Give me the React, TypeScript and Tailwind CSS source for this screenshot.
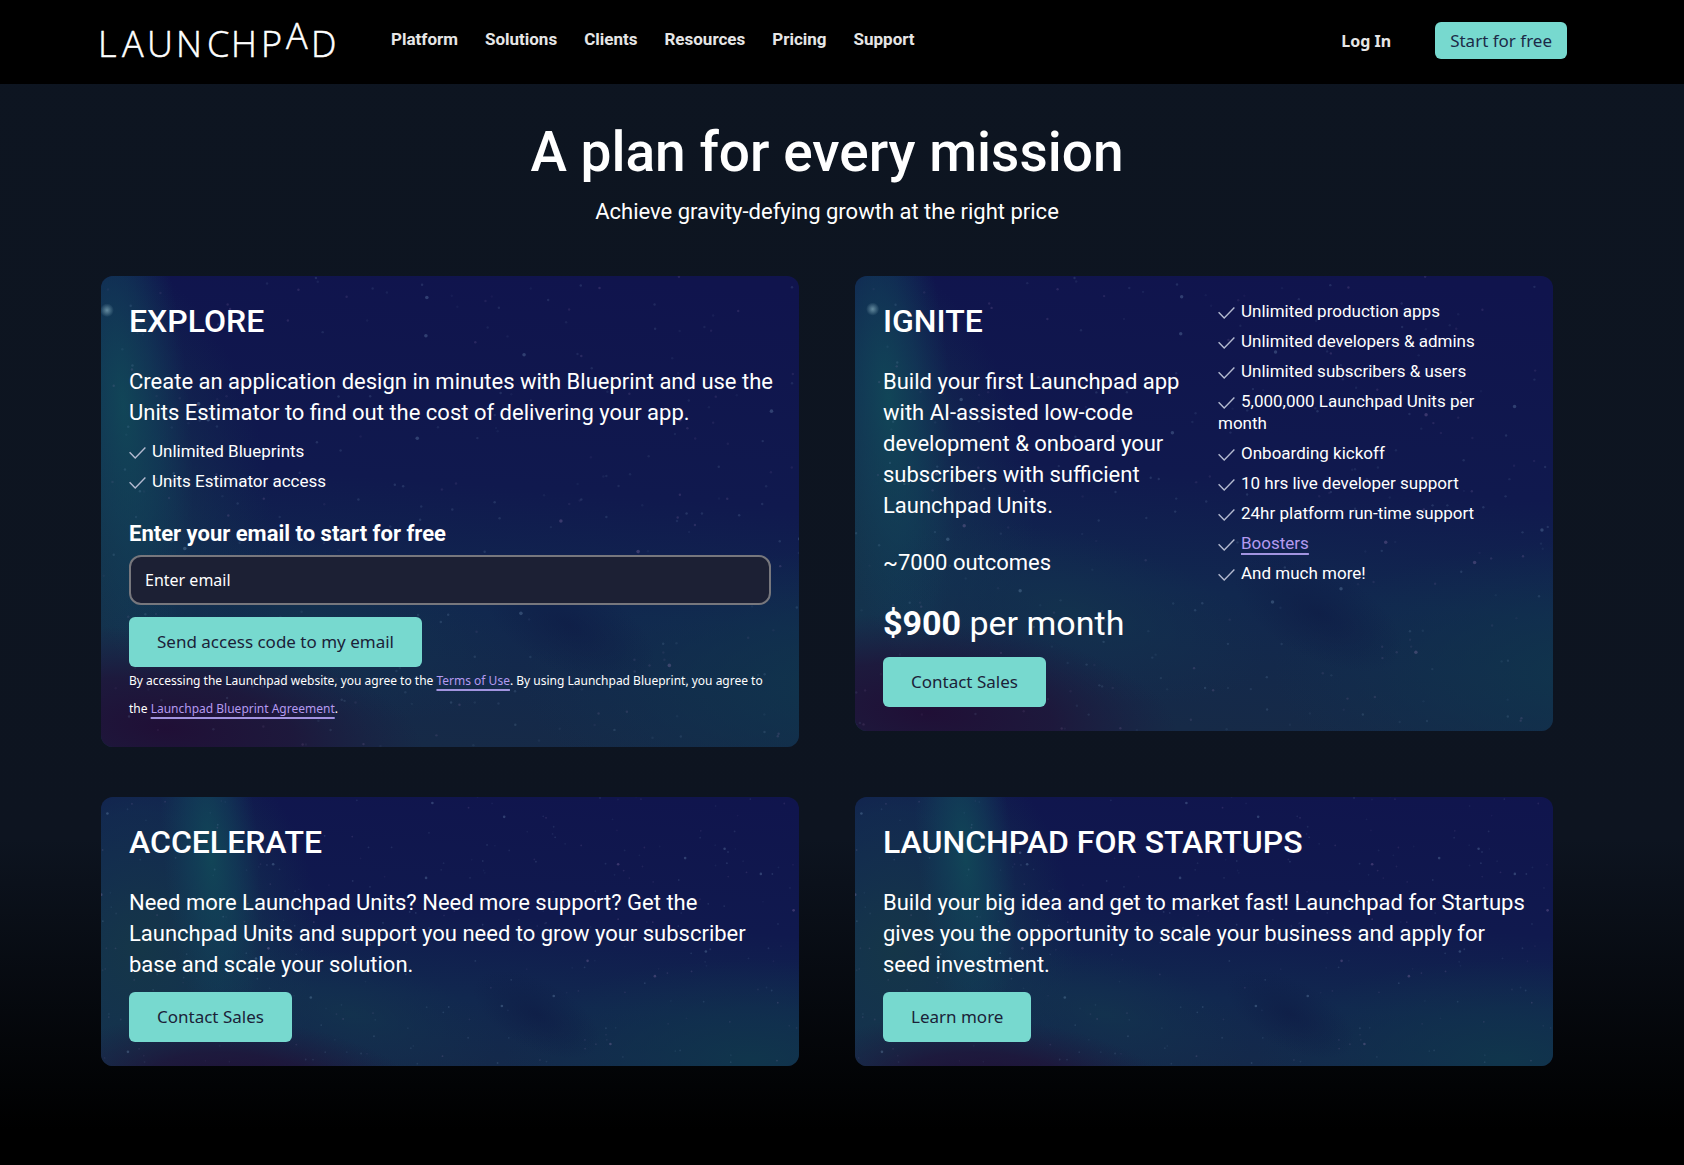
import type { ReactNode } from "react";

const DISPLAY = "font-['Roboto','Noto_Sans',sans-serif]";
const BODY = "font-['Noto_Sans','Open_Sans',sans-serif]";

const NAV = ["Platform", "Solutions", "Clients", "Resources", "Pricing", "Support"];

const IGNITE_FEATURES = [
  "Unlimited production apps",
  "Unlimited developers & admins",
  "Unlimited subscribers & users",
  "5,000,000 Launchpad Units per month",
  "Onboarding kickoff",
  "10 hrs live developer support",
  "24hr platform run-time support",
  "Boosters",
  "And much more!",
];

/* Deterministic pseudo-random star field. */
const STARS = (() => {
  let seed = 41;
  const next = () => {
    seed = (seed * 16807) % 2147483647;
    return seed / 2147483647;
  };
  return Array.from({ length: 420 }, () => {
    const x = Math.round(next() * 6970) / 10;
    const y = Math.round(next() * 3440) / 10;
    const k = next();
    return {
      x,
      y,
      r: k > 0.94 ? 1.3 : 0.9,
      o: k > 0.94 ? 0.26 : 0.05 + next() * 0.12,
      c: next() > 0.6 ? "#b58fc8" : "#8fb4d8",
    };
  });
})();

function Sky({ id }: { id: string }) {
  const u = (name: string) => `url(#${id}-${name})`;
  return (
    <svg
      aria-hidden="true"
      className="absolute inset-0 -z-10 h-full w-full"
      viewBox="0 0 697 344"
      preserveAspectRatio="xMidYMid slice"
    >
      <defs>
        <linearGradient id={`${id}-base`} x1="0.65" y1="0" x2="0.5" y2="1">
          <stop offset="0" stopColor="#10144d" />
          <stop offset="0.45" stopColor="#10194e" />
          <stop offset="0.7" stopColor="#11284f" />
          <stop offset="1" stopColor="#162a47" />
        </linearGradient>
        <radialGradient id={`${id}-teal`}>
          <stop offset="0" stopColor="#114a59" stopOpacity="0.85" />
          <stop offset="0.5" stopColor="#11445a" stopOpacity="0.5" />
          <stop offset="1" stopColor="#11405a" stopOpacity="0" />
        </radialGradient>
        <radialGradient id={`${id}-left`}>
          <stop offset="0" stopColor="#153648" stopOpacity="1" />
          <stop offset="0.6" stopColor="#143650" stopOpacity="0.6" />
          <stop offset="1" stopColor="#143450" stopOpacity="0" />
        </radialGradient>
        <radialGradient id={`${id}-mid`}>
          <stop offset="0" stopColor="#13344e" stopOpacity="0.8" />
          <stop offset="1" stopColor="#13304f" stopOpacity="0" />
        </radialGradient>
        <radialGradient id={`${id}-corner`}>
          <stop offset="0" stopColor="#10364c" stopOpacity="0.95" />
          <stop offset="0.5" stopColor="#10334d" stopOpacity="0.55" />
          <stop offset="1" stopColor="#10304f" stopOpacity="0" />
        </radialGradient>
        <radialGradient id={`${id}-plum`}>
          <stop offset="0" stopColor="#200f36" stopOpacity="1" />
          <stop offset="0.5" stopColor="#1f1439" stopOpacity="0.8" />
          <stop offset="1" stopColor="#1c1a40" stopOpacity="0" />
        </radialGradient>
        <radialGradient id={`${id}-dark`}>
          <stop offset="0" stopColor="#0e1a44" stopOpacity="0.6" />
          <stop offset="1" stopColor="#0e1a44" stopOpacity="0" />
        </radialGradient>
        <radialGradient id={`${id}-glow`}>
          <stop offset="0" stopColor="#9cc4d0" stopOpacity="0.6" />
          <stop offset="1" stopColor="#9cc4d0" stopOpacity="0" />
        </radialGradient>
      </defs>
      <rect width="697" height="344" fill={u("base")} />
      <ellipse cx="40" cy="190" rx="180" ry="230" fill={u("left")} />
      <ellipse cx="110" cy="95" rx="48" ry="200" fill={u("teal")} transform="rotate(-5 110 95)" />
      <ellipse cx="250" cy="255" rx="150" ry="60" fill={u("mid")} transform="rotate(14 250 255)" />
      <ellipse cx="650" cy="300" rx="250" ry="100" fill={u("corner")} />
      <ellipse cx="435" cy="255" rx="70" ry="34" fill={u("dark")} transform="rotate(28 435 255)" />
      <ellipse cx="140" cy="330" rx="190" ry="72" fill={u("plum")} transform="rotate(6 140 330)" />
      <circle cx="98" cy="25" r="5" fill={u("glow")} />
      {STARS.map((s, i) => (
        <circle key={i} cx={s.x} cy={s.y} r={s.r} fill={s.c} opacity={s.o} />
      ))}
    </svg>
  );
}

function Card({ id, title, children }: { id: string; title: string; children: ReactNode }) {
  return (
    <section
      aria-labelledby={`${id}-title`}
      className="relative isolate overflow-hidden rounded-xl px-7 pt-6 pb-6"
    >
      <Sky id={id} />
      <Title id={id}>{title}</Title>
      {children}
    </section>
  );
}

function Title({ id, children }: { id: string; children: ReactNode }) {
  return (
    <h2 id={`${id}-title`} className="text-[32px] leading-[43px] font-medium">
      {children}
    </h2>
  );
}

function Lead({ children }: { children: ReactNode }) {
  return <p className="mt-[23px] -mr-1 mb-3 text-[22px] leading-[31px]">{children}</p>;
}

function Check() {
  return (
    <svg
      aria-hidden="true"
      className="mr-1.5 inline-block h-3 w-[17px] align-[-2px]"
      viewBox="0 0 17 12"
      fill="none"
      stroke="#b4bad0"
      strokeWidth="1.4"
    >
      <path d="M0.6 5.2 L6.2 11 L16.4 0.6" />
    </svg>
  );
}

function Features({ items }: { items: string[] }) {
  return (
    <ul className="flex flex-col gap-2 pr-4 text-[17px] leading-[22px]">
      {items.map((item) => (
        <li key={item}>
          <Check />
          {item === "Boosters" ? <TextLink>{item}</TextLink> : item}
        </li>
      ))}
    </ul>
  );
}

function TextLink({ children }: { children: ReactNode }) {
  return (
    <a
      href="#"
      className="text-[#b49af0] underline decoration-[#a294e0] decoration-2 underline-offset-4 [text-decoration-skip-ink:none]"
    >
      {children}
    </a>
  );
}

function Action({ children }: { children: ReactNode }) {
  return (
    <button
      type="button"
      className={`${BODY} block h-[50px] rounded-md bg-[#77d9cf] px-7 text-[17px] text-[#1b2238]`}
    >
      {children}
    </button>
  );
}

function Logo() {
  return (
    <svg role="img" aria-label="Launchpad" className="h-[62px] w-[242px]" viewBox="-4 -12 242 62">
      <text
        className="font-['Open_Sans','Noto_Sans',sans-serif] text-[36px] font-light"
        fill="#ffffff"
        stroke="#ffffff"
        strokeWidth="0.5"
        x="-3 21 46 75 106 130 160 185 210"
        y="37 37 37 37 37 37 37 29 37"
      >
        LAUNCHPAD
      </text>
    </svg>
  );
}

export default function App() {
  return (
    <div
      className={`${DISPLAY} min-h-screen bg-[linear-gradient(180deg,#0d1521_0%,#0d1420_72%,#000000_97%)] pb-24 text-white`}
    >
      <header className="flex h-[84px] items-start bg-black pr-[117px] pl-[97px]">
        <a href="#" className="mt-2">
          <Logo />
        </a>
        <nav className="mt-7 ml-[52px] flex gap-[27px] text-[17px] leading-[22px] font-bold text-[#e6e6e6]">
          {NAV.map((item) => (
            <a key={item} href="#">
              {item}
            </a>
          ))}
        </nav>
        <div className={`${BODY} mt-[22px] ml-auto flex items-center gap-11`}>
          <a href="#" className="text-base font-bold text-[#e6e6e6]">
            Log In
          </a>
          <button
            type="button"
            className="h-[37px] rounded-md bg-[#77d9cf] px-[15px] text-[17px] text-[#1b2a48]"
          >
            Start for free
          </button>
        </div>
      </header>

      <main className="pr-[131px] pl-[101px]">
        <div className="pt-9 pb-12 text-center">
          <h1 className="text-[55px] leading-[64px] font-medium">A plan for every mission</h1>
          <p className="mt-3 text-[22px] leading-8">Achieve gravity-defying growth at the right price</p>
        </div>

        <div className="grid grid-cols-2 items-start gap-x-14 gap-y-[50px]">
          <Card id="explore" title="EXPLORE">
            <Lead>
              Create an application design in minutes with Blueprint and use the Units Estimator to
              find out the cost of delivering your app.
            </Lead>
            <Features items={["Unlimited Blueprints", "Units Estimator access"]} />
            <form onSubmit={(e) => e.preventDefault()}>
              <label htmlFor="email" className="mt-7 block text-[22px] leading-7 font-bold">
                Enter your email to start for free
              </label>
              <input
                id="email"
                type="email"
                placeholder="Enter email"
                className={`${BODY} mt-[7px] mb-3 block h-[50px] w-full rounded-xl border-2 border-[#77777d] bg-[#1c2034] px-3.5 text-base text-white placeholder:text-white`}
              />
              <Action>Send access code to my email</Action>
            </form>
            <p className={`${BODY} text-xs leading-7`}>
              By accessing the Launchpad website, you agree to the <TextLink>Terms of Use</TextLink>.
              By using Launchpad Blueprint, you agree to the{" "}
              <TextLink>Launchpad Blueprint Agreement</TextLink>.
            </p>
          </Card>

          <section
            aria-labelledby="ignite-title"
            className="relative isolate grid grid-cols-2 gap-x-7 overflow-hidden rounded-xl px-7 pt-6 pb-6"
          >
            <Sky id="ignite" />
            <div>
              <Title id="ignite">IGNITE</Title>
              <Lead>
                Build your first Launchpad app with AI-assisted low-code development &amp; onboard
                your subscribers with sufficient Launchpad Units.
              </Lead>
              <p className="mt-[26px] text-[22px] leading-8">~7000 outcomes</p>
              <p className="mt-5 mb-2.5 text-[34px] leading-[48px]">
                <strong className="font-bold">$900</strong> per month
              </p>
              <Action>Contact Sales</Action>
            </div>
            <Features items={IGNITE_FEATURES} />
          </section>

          <Card id="accelerate" title="ACCELERATE">
            <Lead>
              Need more Launchpad Units? Need more support? Get the Launchpad Units and support you
              need to grow your subscriber base and scale your solution.
            </Lead>
            <Action>Contact Sales</Action>
          </Card>

          <Card id="startups" title="LAUNCHPAD FOR STARTUPS">
            <Lead>
              Build your big idea and get to market fast! Launchpad for Startups gives you the
              opportunity to scale your business and apply for seed investment.
            </Lead>
            <Action>Learn more</Action>
          </Card>
        </div>
      </main>
    </div>
  );
}
